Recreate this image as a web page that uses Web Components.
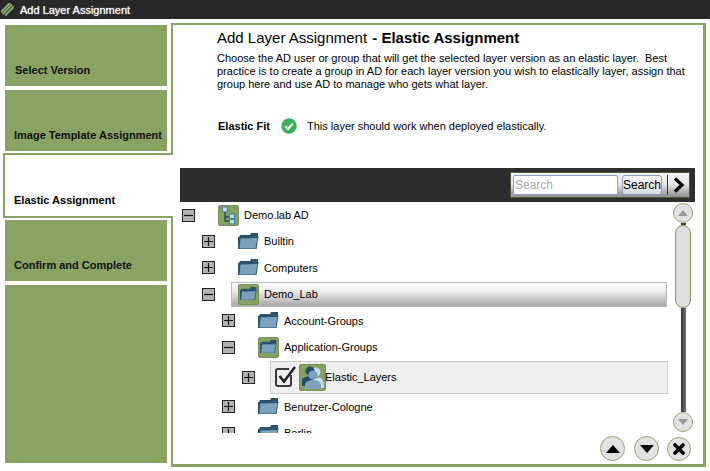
<!DOCTYPE html>
<html>
<head>
<meta charset="utf-8">
<title>Add Layer Assignment</title>
<style>
	html, body { margin: 0; padding: 0; background: #fff; }
	body { font: 12px "Liberation Sans", Arial, sans-serif; color: #000; }
</style>
</head>
<body>
<layer-dialog></layer-dialog>

<script>
const GREEN = "#88a363";

const ICONS = {
	folder: `<svg width="21" height="17" viewBox="0 0 21 17"><path d="M1 4 L2 2 L12 2 L13 0 L20 0 L20 3 L1 6 Z" fill="#2b536f"/><path d="M0 16 L0 4 L20 3 L20.5 3.5 L18.5 16 Z" fill="#2b536f"/><path d="M1.5 15.5 L2.5 5.5 L19.5 5 L17.5 15.5 Z" fill="#7ba1bd"/></svg>`,
	domain: `<svg width="21" height="21" viewBox="0 0 21 21"><path d="M7 7 V16 H11 M7 12 H11" fill="none" stroke="#2b4a5c" stroke-width="1.4"/><rect x="4.5" y="2" width="5" height="5" fill="#b9d8ea" stroke="#4c7f9c"/><rect x="11.5" y="9" width="5" height="4.5" fill="#b9d8ea" stroke="#4c7f9c"/><rect x="11.5" y="14.5" width="5" height="4.5" fill="#b9d8ea" stroke="#4c7f9c"/></svg>`,
	group: `<svg width="27" height="27" viewBox="0 0 27 27"><circle cx="17" cy="8" r="4.5" fill="#c4dcec"/><path d="M14 24 V16 Q17 13 22 14 Q25 16 25 24 Z" fill="#c4dcec"/><circle cx="11" cy="7" r="4.5" fill="#234e6b"/><path d="M3 22 V15 Q7 11 14 13 L14 22 Z" fill="#234e6b"/><circle cx="14" cy="11" r="4.6" fill="#7ba1bd"/><path d="M6 25 V20 Q8 16 14 16 Q20 16 22 20 V25 Z" fill="#7ba1bd"/></svg>`,
	check: `<svg width="21" height="21" viewBox="0 0 21 21"><path d="M16 9 V18 Q16 20 14 20 H3 Q1 20 1 18 V5 Q1 3 3 3 H14" fill="none" stroke="#3a3a3a" stroke-width="2"/><path d="M4.5 10 L9 15.5 L20 1" fill="none" stroke="#222" stroke-width="2.6"/></svg>`,
	ok: `<svg width="16" height="16" viewBox="0 0 16 16"><circle cx="8" cy="8" r="7.7" fill="#3fae5a"/><path d="M4.3 8.3 L7 11 L11.8 5.6" fill="none" stroke="#fff" stroke-width="2"/></svg>`,
	stripes: `<svg width="13" height="13" viewBox="0 0 13 13"><path d="M0 9 L9 0 M1.5 11 L11 1.5 M4 12.5 L13 3.5" stroke="#88a363" stroke-width="2.2" fill="none"/></svg>`,
	chevron: `<svg width="12" height="16" viewBox="0 0 12 16"><path d="M2 1.5 L9 8 L2 14.5" fill="none" stroke="#000" stroke-width="3.2"/></svg>`
};

/////////////////////////////////////////// wizard tab ///////////////////////////////////////////

const tabTemplate = document.createElement("template");
tabTemplate.innerHTML = `
<style>
	:host {
		display: flex;
		align-items: flex-end;
		box-sizing: border-box;
		height: 61px;
		padding: 0 0 9px 10px;
		background: ${GREEN};
		font: bold 11px/14px "Liberation Sans", Arial, sans-serif;
		color: #111;
		white-space: nowrap;
	}
	:host([active]) {
		position: relative;
		z-index: 1;
		height: 65px;
		margin: -2px -6px -2px -2px;
		padding: 0 0 9px 9px;
		background: #fff;
		border: solid ${GREEN};
		border-width: 2px 0 2px 2px;
		color: #000;
	}
	:host([blank]) { height: 178px; }
</style>
<slot></slot>
`;
class WizardTab extends HTMLElement {
	constructor(...args) {
		super(...args);
		this._shadow = this.attachShadow({ mode: 'open' });
		this._shadow.appendChild(tabTemplate.content.cloneNode(true));
	}
}
customElements.define("wizard-tab", WizardTab);

/////////////////////////////////////////// tree node ////////////////////////////////////////////

const nodeTemplate = document.createElement("template");
nodeTemplate.innerHTML = `
<style>
	:host {
		display: flex;
		align-items: center;
		height: 26.5px;
		flex: none;
		padding-left: calc(var(--depth, 0) * 20px);
		font: 11px "Liberation Sans", Arial, sans-serif;
		color: #000;
		white-space: nowrap;
	}
	:host([first]) { height: 26px; }
	.toggle {
		flex: none;
		box-sizing: border-box;
		width: 13px;
		height: 13px;
		border: 1px solid #222;
		background: #b2b2b2;
		display: flex;
		align-items: center;
		justify-content: center;
	}
	.body {
		flex: 1;
		display: flex;
		align-items: center;
		margin-left: 16px;
		padding-left: 6px;
		box-sizing: border-box;
		height: 25px;
		border: 1px solid transparent;
		border-width: 1px 0 1px 1px;
	}
	.tile {
		flex: none;
		width: 21px;
		height: 21px;
		display: flex;
		align-items: center;
		justify-content: center;
		border-radius: 3px;
		margin-right: 5px;
	}
	.tile.on { background: #86a160; box-shadow: inset 0 0 0 1px #769352; }
	:host([current]) .body {
		background: linear-gradient(#fdfdfd, #ececec 35%, #a8a8a8);
		border: 1px solid #b9b9b9;
		margin-right: 1px;
	}
	:host([picked]) { height: 33px; }
	:host([picked]) .body {
		height: 33px;
		margin-left: 15px;
		padding-left: 4px;
		background: #efefef;
		border: 1px solid #ccc;
	}
	:host([picked]) .tile { width: 27px; height: 27px; margin: 0 -1px 0 0; }
	.check { display: none; margin-right: 3px; }
	:host([picked]) .check { display: block; }
</style>
<span class="toggle"><svg width="9" height="9" viewBox="0 0 9 9"><path class="mark" fill="none" stroke="#111" stroke-width="1.2"/></svg></span>
<div class="body">
	<span class="check">${ICONS.check}</span>
	<span class="tile"></span>
	<slot></slot>
</div>
`;
class TreeNode extends HTMLElement {
	constructor(...args) {
		super(...args);
		this._shadow = this.attachShadow({ mode: 'open' });
		this._shadow.appendChild(nodeTemplate.content.cloneNode(true));
	}

	connectedCallback() {
		const open = this.hasAttribute("open");
		this._shadow.querySelector(".mark").setAttribute("d", open ? "M0 4.5 H9" : "M0 4.5 H9 M4.5 0 V9");
		const tile = this._shadow.querySelector(".tile");
		const icon = this.getAttribute("icon") || "folder";
		tile.innerHTML = ICONS[icon];
		tile.classList.toggle("on", this.hasAttribute("tile"));
		if (icon === "folder" && this.hasAttribute("tile")) {
			tile.firstElementChild.setAttribute("width", "17");
			tile.firstElementChild.setAttribute("height", "14");
		}
		this.style.setProperty("--depth", this.getAttribute("depth") || 0);
	}
}
customElements.define("tree-node", TreeNode);

/////////////////////////////////////////// round button /////////////////////////////////////////

const roundTemplate = document.createElement("template");
roundTemplate.innerHTML = `
<style>
	:host {
		display: flex;
		flex: none;
		align-items: center;
		justify-content: center;
		box-sizing: border-box;
		width: var(--size, 25px);
		height: var(--size, 25px);
		border-radius: 50%;
		border: 1px solid #8fa874;
		background: #e2e2e2;
	}
</style>
<slot></slot>
`;
class RoundButton extends HTMLElement {
	constructor(...args) {
		super(...args);
		this._shadow = this.attachShadow({ mode: 'open' });
		this._shadow.appendChild(roundTemplate.content.cloneNode(true));
	}
}
customElements.define("round-button", RoundButton);

/////////////////////////////////////////// search bar ///////////////////////////////////////////

const searchTemplate = document.createElement("template");
searchTemplate.innerHTML = `
<style>
	:host {
		display: flex;
		align-items: center;
		box-sizing: border-box;
		width: 180px;
		height: 26px;
		padding-left: 2px;
		border: 1px solid #4f5a3a;
		background: linear-gradient(#f4f4f4, #e8e8e8 45%, #8f8f8f);
	}
	input {
		box-sizing: border-box;
		width: 105px;
		height: 20px;
		padding: 0 1px;
		border: 1px solid #8ba0b6;
		border-radius: 2px;
		background: #fff;
		font: 12px "Liberation Sans", Arial, sans-serif;
		outline: 0;
	}
	input::placeholder { color: #a9a9a9; opacity: 1; }
	button {
		box-sizing: border-box;
		width: 40px;
		height: 20px;
		margin-left: 4px;
		padding: 0;
		border: 1px solid #8ba0b6;
		border-radius: 3px;
		background: linear-gradient(#fafafa, #d8dde3);
		font: 12px "Liberation Sans", Arial, sans-serif;
		color: #000;
	}
	.sep { width: 1px; height: 20px; margin: 0 5px 0 5px; background: #333; }
	.next { display: flex; }
</style>
<input type="text" placeholder="Search">
<button type="button">Search</button>
<span class="sep"></span>
<span class="next">${ICONS.chevron}</span>
`;
class SearchBar extends HTMLElement {
	constructor(...args) {
		super(...args);
		this._shadow = this.attachShadow({ mode: 'open' });
		this._shadow.appendChild(searchTemplate.content.cloneNode(true));
	}
}
customElements.define("search-bar", SearchBar);

/////////////////////////////////////////// tree scrollbar ///////////////////////////////////////

const scrollTemplate = document.createElement("template");
scrollTemplate.innerHTML = `
<style>
	:host {
		display: flex;
		flex-direction: column;
		align-items: center;
		flex: none;
		box-sizing: border-box;
		width: 27px;
		padding: 1px 0 0 3px;
		--size: 20px;
	}
	.joint { width: 5px; height: 2px; background: #444; }
	.thumb {
		box-sizing: border-box;
		width: 16px;
		height: 83px;
		border: 1px solid #7f9a5c;
		border-radius: 8px;
		background: #dedede;
	}
	.track { width: 5px; height: 104px; background: linear-gradient(90deg, #333, #777); }
	svg { display: block; }
</style>
<round-button><svg width="10" height="6" viewBox="0 0 10 6"><path d="M5 0 L10 6 H0 Z" fill="#9a9a9a"/></svg></round-button>
<span class="joint"></span>
<span class="thumb"></span>
<span class="track"></span>
<round-button><svg width="10" height="6" viewBox="0 0 10 6"><path d="M0 0 H10 L5 6 Z" fill="#9a9a9a"/></svg></round-button>
`;
class TreeScrollbar extends HTMLElement {
	constructor(...args) {
		super(...args);
		this._shadow = this.attachShadow({ mode: 'open' });
		this._shadow.appendChild(scrollTemplate.content.cloneNode(true));
	}
}
customElements.define("tree-scrollbar", TreeScrollbar);

/////////////////////////////////////////// dialog ///////////////////////////////////////////////

const dialogTemplate = document.createElement("template");
dialogTemplate.innerHTML = `
<style>
	:host {
		display: flex;
		flex-direction: column;
		width: 710px;
		height: 471px;
		overflow: hidden;
		background: #fff;
		font: 12px "Liberation Sans", Arial, sans-serif;
	}
	header {
		flex: none;
		display: flex;
		align-items: center;
		gap: 6px;
		height: 19px;
		padding-left: 1px;
		background: #282828;
		color: #f2f2f2;
		font: 11px "Liberation Sans", Arial, sans-serif;
		text-shadow: 0 0 1px #fff;
	}
	header svg { display: block; }
	main { flex: none; display: flex; height: 444px; margin-top: 4px; }
	nav {
		flex: none;
		display: flex;
		flex-direction: column;
		gap: 4px;
		width: 162px;
		margin: 2px 4px 0 5px;
	}
	section {
		flex: none;
		box-sizing: border-box;
		width: 535px;
		height: 444px;
		border: solid ${GREEN};
		border-width: 2px 3px 3px 2px;
		display: flex;
		flex-direction: column;
	}
	.intro { height: 143px; flex: none; box-sizing: border-box; padding: 4px 10px 0 44px; }
	h1 { margin: 0; font: 15px/18px "Liberation Sans", Arial, sans-serif; }
	h1 b { font-weight: bold; margin-left: 1px; }
	p { margin: 5px 0 0; font: 11px/13px "Liberation Sans", Arial, sans-serif; white-space: nowrap; }
	.fit { display: flex; align-items: center; height: 16px; margin: 27px 0 0 1px; font-size: 11px; }
	.fit b { width: 63px; }
	.fit svg { display: block; margin-right: 10px; }
	.bar {
		flex: none;
		display: flex;
		justify-content: flex-end;
		align-items: center;
		box-sizing: border-box;
		height: 34px;
		margin: 0 8px 0 7px;
		padding-right: 5px;
		background: #2e2e2e;
	}
	.browser { flex: none; display: flex; height: 231px; margin: 0 8px 0 7px; }
	.tree {
		flex: 1;
		min-width: 0;
		overflow: hidden;
		display: flex;
		flex-direction: column;
		padding-left: 2px;
	}
	footer { flex: none; display: flex; align-items: center; padding: 3px 12px 0 0; justify-content: flex-end; }
	footer round-button + round-button { margin-left: 9px; }
	footer round-button:last-child { margin-left: 8px; --size: 24px; }
	footer svg { display: block; }
</style>
<header>${ICONS.stripes}<span>Add Layer Assignment</span></header>
<main>
	<nav>
		<wizard-tab>Select Version</wizard-tab>
		<wizard-tab style="padding-left: 9px">Image Template Assignment</wizard-tab>
		<wizard-tab active>Elastic Assignment</wizard-tab>
		<wizard-tab style="padding-left: 9px">Confirm and Complete</wizard-tab>
		<wizard-tab blank></wizard-tab>
	</nav>
	<section>
		<div class="intro">
			<h1>Add Layer Assignment <b>- Elastic Assignment</b></h1>
			<p>Choose the AD user or group that will get the selected layer version as an elastic layer.&nbsp; Best<br>practice is to create a group in AD for each layer version you wish to elastically layer, assign that<br>group here and use AD to manage who gets what layer.</p>
			<div class="fit"><b>Elastic Fit</b>${ICONS.ok}<span>This layer should work when deployed elastically.</span></div>
		</div>
		<div class="bar"><search-bar></search-bar></div>
		<div class="browser">
			<div class="tree">
				<tree-node first open icon="domain" tile>Demo.lab AD</tree-node>
				<tree-node depth="1">Builtin</tree-node>
				<tree-node depth="1">Computers</tree-node>
				<tree-node depth="1" open tile current>Demo_Lab</tree-node>
				<tree-node depth="2">Account-Groups</tree-node>
				<tree-node depth="2" open tile>Application-Groups</tree-node>
				<tree-node depth="3" icon="group" tile picked>Elastic_Layers</tree-node>
				<tree-node depth="2">Benutzer-Cologne</tree-node>
				<tree-node depth="2">Berlin</tree-node>
			</div>
			<tree-scrollbar></tree-scrollbar>
		</div>
		<footer>
			<round-button><svg width="14" height="8" viewBox="0 0 14 8"><path d="M7 0 L14 8 H0 Z" fill="#000"/></svg></round-button>
			<round-button><svg width="14" height="8" viewBox="0 0 14 8"><path d="M0 0 H14 L7 8 Z" fill="#000"/></svg></round-button>
			<round-button><svg width="12" height="12" viewBox="0 0 12 12"><path d="M2 2 L10 10 M10 2 L2 10" stroke="#000" stroke-width="3.6" stroke-linecap="round"/></svg></round-button>
		</footer>
	</section>
</main>
`;
class LayerDialog extends HTMLElement {
	constructor(...args) {
		super(...args);
		this._shadow = this.attachShadow({ mode: 'open' });
		this._shadow.appendChild(dialogTemplate.content.cloneNode(true));
	}
}
customElements.define("layer-dialog", LayerDialog);
</script>
</body>
</html>
